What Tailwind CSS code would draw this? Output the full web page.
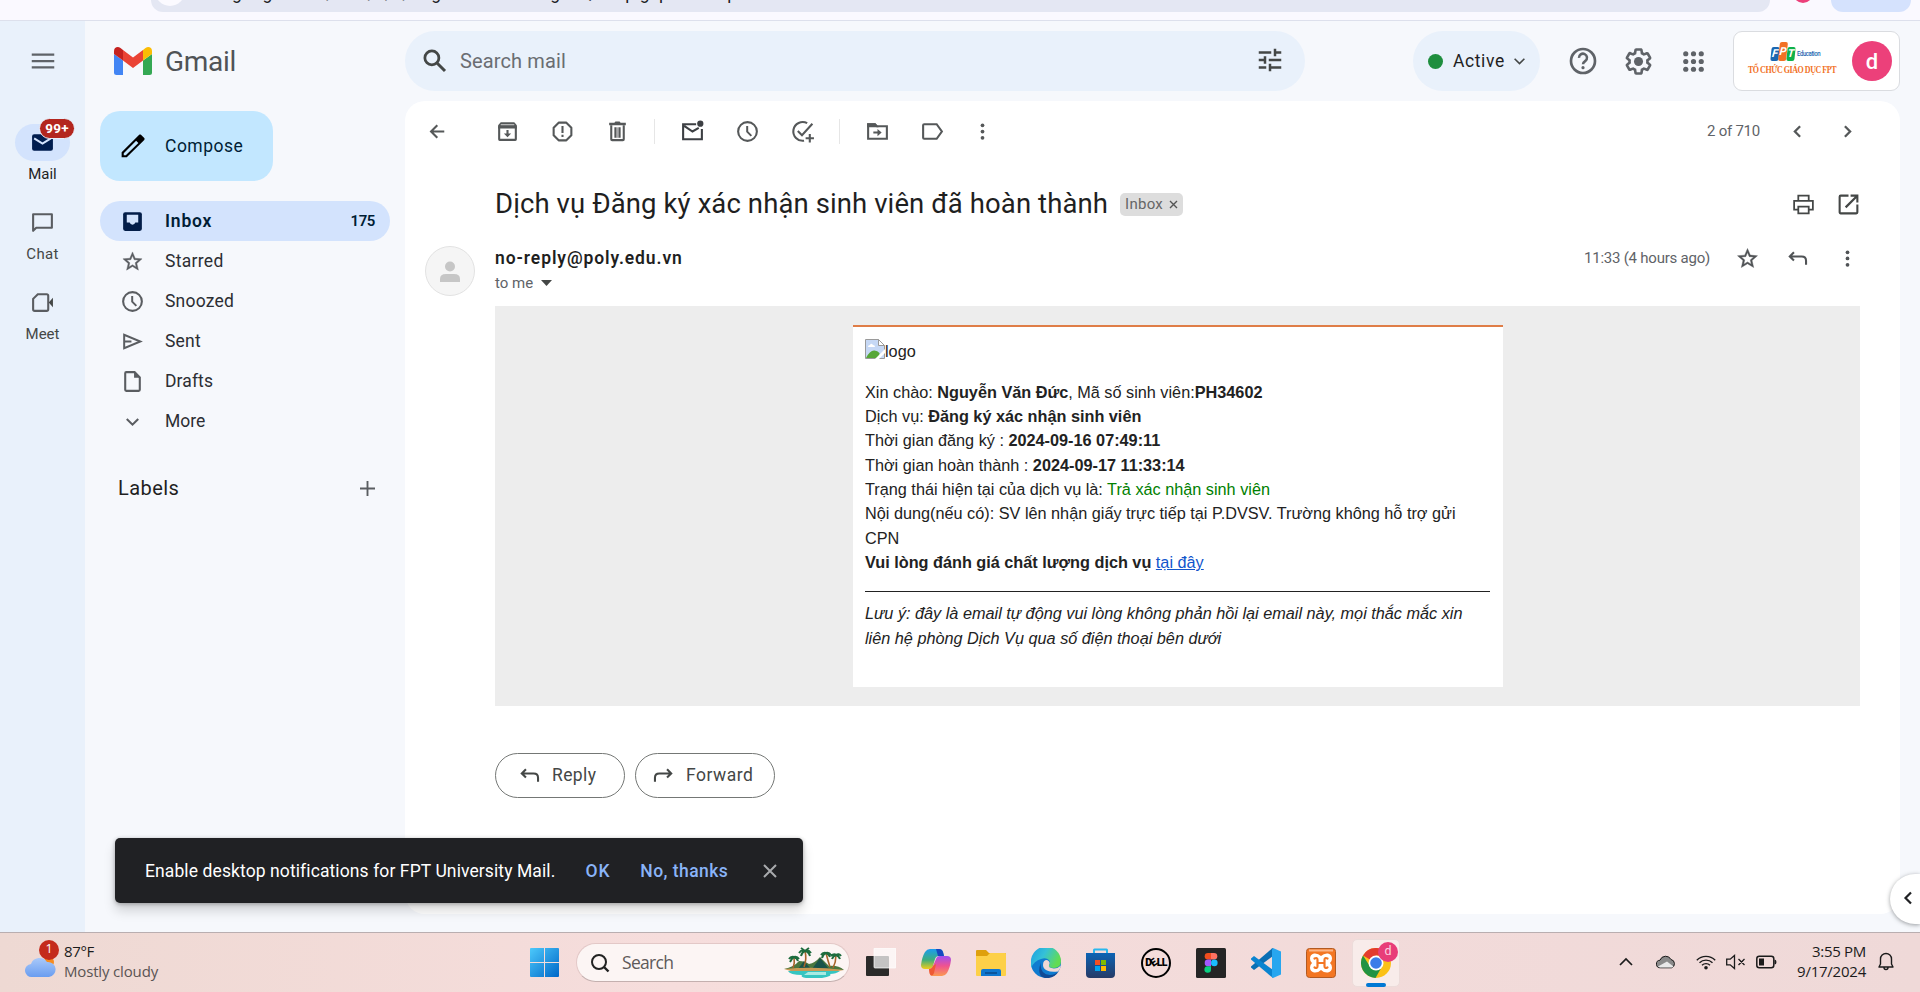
<!DOCTYPE html>
<html lang="vi">
<head>
<meta charset="utf-8">
<title>Gmail</title>
<script src="https://cdn.jsdelivr.net/npm/@tailwindcss/browser@4"></script>
</head>
<body class="flex h-[992px] w-[1920px] flex-col overflow-hidden bg-[#f6f8fc] font-['Roboto',sans-serif] text-[#1f1f1f]">

<!-- icon sprite -->
<svg class="hidden">
  <symbol id="clock" viewBox="0 0 24 24"><circle cx="12" cy="12" r="9" fill="none" stroke="currentColor" stroke-width="2"/><path d="M11.700 6.800v5.400l4 4" fill="none" stroke="currentColor" stroke-width="1.900"/></symbol>
  <symbol id="star" viewBox="0 0 24 24"><path fill="currentColor" stroke="currentColor" stroke-width=".4" d="M22 9.240l-7.190-.62L12 2 9.190 8.630 2 9.240l5.460 4.730L5.820 21 12 17.270 18.180 21l-1.630-7.030L22 9.240zM12 15.400l-3.760 2.270 1-4.280-3.320-2.880 4.380-.38L12 6.100l1.710 4.040 4.380.38-3.320 2.880 1 4.280L12 15.400z"/></symbol>
  <symbol id="more" viewBox="0 0 24 24"><g fill="currentColor"><circle cx="12" cy="6" r="1.800"/><circle cx="12" cy="12" r="1.800"/><circle cx="12" cy="18" r="1.800"/></g></symbol>
  <symbol id="reply" viewBox="0 0 24 24"><path d="M8.600 6 4.600 10l4 4M4.600 10H16q4.200 0 4.200 4.200V18" fill="none" stroke="currentColor" stroke-width="2"/></symbol>
  <symbol id="chev" viewBox="0 0 24 24"><path d="M14.500 7 9.500 12l5 5" fill="none" stroke="currentColor" stroke-width="2.200"/></symbol>
</svg>

<!-- browser toolbar edge -->
<div class="flex h-[21px] shrink-0 items-start border-b border-[#dde0ec] bg-[#faf9ff] pl-[151px]">
  <div class="flex h-3 w-[1619px] overflow-hidden rounded-b-[20px] bg-[#e4e7f3] text-[17.5px] leading-[20px] text-[#202124]">
    <div class="mt-[-24px] ml-1 size-[30px] shrink-0 rounded-full bg-[#fbfaff]"></div>
    <div class="mt-[-17px] ml-[8px] flex whitespace-nowrap tracking-[0.2px]">mail.google.com<span class="w-[110px] text-right">/mail/u/0/#og</span><span class="w-[124px] text-right">inboxFMfcg</span><span class="w-[75px] text-right">zQVzNp</span><span class="w-[14px] text-right">lg</span><span class="w-[18px] text-right">Lp</span><span class="w-[70px] text-right">xnLMRp</span></div>
  </div>
  <div class="mt-[-17px] ml-[23px] size-5 rounded-full bg-[#ec407a]"></div>
  <div class="ml-[18px] h-3 w-[80px] rounded-b-[18px] bg-[#d5e2fd]"></div>
</div>

<div class="flex h-[911px] shrink-0">
  <!-- app rail -->
  <nav class="flex w-[85px] shrink-0 flex-col items-center bg-[#e9f1fb] text-[15px] text-[#444746]">
    <svg class="mt-[25px] size-[30px]" viewBox="0 0 24 24" fill="#5f6368"><path d="M3 18h18v-1.800H3zM3 12.900h18v-1.800H3zM3 6v1.800h18V6z"/></svg>
    <div class="relative mt-12 flex h-[37px] w-[55px] items-center justify-center rounded-full bg-[#d3e3fd]">
      <svg class="size-[25px]" viewBox="0 0 24 24"><path fill="#001d4f" d="M4 4h16a2 2 0 0 1 2 2v12a2 2 0 0 1-2 2H4a2 2 0 0 1-2-2V6a2 2 0 0 1 2-2z"/><path d="M4 8l8 5 8-5" fill="none" stroke="#d3e3fd" stroke-width="2"/></svg>
      <span class="absolute -top-[6px] left-[24px] flex h-[21px] w-[36px] items-center justify-center rounded-full border border-[#e9f1fb] bg-[#b3261e] text-[13.5px] font-bold tracking-[.3px] text-white">99+</span>
    </div>
    <span class="mt-1 leading-[18px] font-[450] text-[#1f1f1f]">Mail</span>
    <svg class="mt-[27px] size-[25px]" viewBox="0 0 24 24"><path d="M3 20V4h18v13H6z" fill="none" stroke="#5a5d61" stroke-width="2" stroke-linejoin="round"/></svg>
    <span class="mt-[10px] leading-[18px] tracking-[.3px]">Chat</span>
    <svg class="mt-[27px] size-[25px]" viewBox="0 0 24 24"><path d="M7.500 4H16q1.500 0 1.500 1.500v13q0 1.500-1.500 1.500H4.500Q3 20 3 18.500V8.500z" fill="none" stroke="#5a5d61" stroke-width="2"/><path d="M18 12l4-4.500v9z" fill="#444746"/></svg>
    <span class="mt-[10px] leading-[18px]">Meet</span>
  </nav>

  <!-- sidebar -->
  <aside class="flex w-[320px] shrink-0 flex-col pl-[15px] text-[17.5px]">
    <div class="flex h-[80px] items-center pl-[14px]">
      <svg class="h-[28px] w-[38px]" viewBox="0 0 38 28"><path d="M0 7l9 6.500V28H2.500Q0 28 0 25.500z" fill="#4285f4"/><path d="M38 7l-9 6.500V28h6.500q2.500 0 2.500-2.500z" fill="#34a853"/><path d="M9 3l10 7.500L29 3v10.500L19 21 9 13.500z" fill="#ea4335"/><path d="M0 7V4C0 .5 3.600-1.200 6.500 1L9 3v10.500z" fill="#c5221f"/><path d="M38 7V4c0-3.500-3.600-5.200-6.500-3L29 3v10.500z" fill="#fbbc04"/></svg>
      <span class="mt-[2px] ml-[13px] text-[28px] tracking-[-0.3px] text-[#505356]">Gmail</span>
    </div>
    <button class="mt-[10px] flex h-[70px] w-[173px] items-center rounded-[20px] bg-[#c2e7ff] pl-[18px] font-[450] text-[#001d35]">
      <svg class="size-[30px]" viewBox="0 0 24 24"><path fill="#000" fill-rule="evenodd" d="M17.660 2.700c-.25 0-.51.100-.7.290L2.900 16.900V21h4.100L21 7.100c.39-.39.39-1.020 0-1.410l-2.640-2.700c-.2-.2-.45-.29-.7-.29zM14.500 7.800l1.800 1.800L6.200 19.400H4.600v-1.700z"/></svg>
      <span class="ml-[17px] tracking-[.5px]">Compose</span>
    </button>
    <div class="mt-5 flex h-10 w-[290px] items-center rounded-full bg-[#d3e3fd] pl-5 font-semibold text-[#001d35]">
      <svg class="size-[25px]" viewBox="0 0 24 24"><rect x="3" y="3" width="18" height="18" rx="2" fill="#041e49"/><path d="M6.500 5.500h11V13h-2.800a2.800 2.800 0 0 1-5.400 0H6.500z" fill="#d3e3fd"/></svg>
      <span class="ml-5 grow tracking-[.8px]">Inbox</span><span class="mr-[15px] text-[15px] tracking-[-.4px]">175</span>
    </div>
    <div class="flex h-10 items-center gap-5 pl-5 tracking-[.3px] text-[#2c2e33]"><svg class="size-[25px] p-[1px] text-[#5a5d61]"><use href="#star"/></svg>Starred</div>
    <div class="flex h-10 items-center gap-5 pl-5 tracking-[.2px] text-[#2c2e33]"><svg class="size-[25px] text-[#5a5d61]"><use href="#clock"/></svg>Snoozed</div>
    <div class="flex h-10 items-center gap-5 pl-5 tracking-[.2px] text-[#2c2e33]"><svg class="size-[25px]" viewBox="0 0 24 24"><path d="M4 5.500v13L19.500 12zM4 12h7" fill="none" stroke="#5a5d61" stroke-width="1.900"/></svg>Sent</div>
    <div class="flex h-10 items-center gap-5 pl-5 tracking-[.1px] text-[#2c2e33]"><svg class="size-[25px]" viewBox="0 0 24 24"><path d="M14 3H6q-1 0-1 1v16q0 1 1 1h12q1 0 1-1V8z" fill="none" stroke="#5a5d61" stroke-width="2"/><path d="M13.500 2.500V8.500h6z" fill="#5a5d61"/></svg>Drafts</div>
    <div class="flex h-10 items-center gap-5 pl-5 text-[#2c2e33]"><svg class="size-[25px]" viewBox="0 0 24 24"><path d="M6.500 9.500l5.500 5.500 5.500-5.500" fill="none" stroke="#5a5d61" stroke-width="2"/></svg>More</div>
    <div class="mt-[27px] flex h-10 items-center justify-between pr-[25px] pl-[18px]">
      <span class="text-[20px] font-[450] tracking-[.45px] text-[#1f1f1f]">Labels</span>
      <svg class="size-[25px]" viewBox="0 0 24 24"><path d="M12 4.800v14.400M4.800 12h14.400" stroke="#5a5d61" stroke-width="1.800"/></svg>
    </div>
  </aside>

  <main class="flex w-[1515px] flex-col">
    <!-- header -->
    <header class="flex h-[80px] w-full shrink-0 items-center">
      <div class="flex h-[60px] w-[900px] items-center rounded-full bg-[#e9f1fb] pr-5 pl-[15px]">
        <svg class="size-[30px]" viewBox="0 0 24 24"><circle cx="9.500" cy="9.500" r="5.600" fill="none" stroke="#444746" stroke-width="2.200"/><path d="M13.800 13.800l6.200 6.200" stroke="#444746" stroke-width="2.400"/></svg>
        <span class="ml-[10px] grow text-[20px] tracking-[.13px] text-[#6a6d72]">Search mail</span>
        <svg class="size-[30px] -translate-y-px" viewBox="0 0 24 24" fill="#444746"><path d="M3 17v2h6v-2H3zM3 5v2h10V5H3zm10 16v-2h8v-2h-8v-2h-2v6h2zM7 9v2H3v2h4v2h2V9H7zm14 4v-2H11v2h10zm-6-4h2V7h4V5h-4V3h-2v6z"/></svg>
      </div>
      <div class="ml-[108px] flex h-[60px] w-[127px] items-center rounded-full bg-[#e9f1fb] pl-[15px]">
        <span class="size-[15px] rounded-full bg-[#1e8e3e]"></span>
        <span class="mt-px ml-[10px] text-[17.5px] font-[450] tracking-[.6px]">Active</span>
        <svg class="ml-[8px] size-[13px]" viewBox="0 0 12 12"><path d="M1.500 3.500L6 8l4.500-4.500" fill="none" stroke="#444746" stroke-width="1.500"/></svg>
      </div>
      <svg class="ml-[27px] size-[32px]" viewBox="0 0 24 24"><circle cx="12" cy="12" r="9" fill="none" stroke="#5f6368" stroke-width="2"/><path d="M9 9.700a3 3 0 1 1 4.800 2.200c-1.100.8-1.800 1.400-1.800 2.600" fill="none" stroke="#5f6368" stroke-width="1.900"/><circle cx="12" cy="17" r="1.200" fill="#5f6368"/></svg>
      <svg class="ml-6 size-[31px]" viewBox="0 0 24 24" fill="#5f6368"><path d="M13.850 22.250h-3.700c-.74 0-1.360-.54-1.450-1.270l-.27-1.890c-.27-.14-.53-.29-.79-.46l-1.800.72c-.7.260-1.470-.03-1.810-.65L2.200 15.530c-.35-.66-.2-1.440.36-1.880l1.530-1.190c-.01-.15-.02-.3-.02-.46 0-.15.010-.31.020-.46l-1.520-1.190c-.59-.45-.74-1.260-.37-1.880l1.850-3.190c.34-.62 1.110-.9 1.790-.63l1.810.73c.26-.17.52-.32.78-.46l.27-1.910c.09-.7.710-1.250 1.440-1.250h3.700c.74 0 1.360.54 1.450 1.270l.27 1.890c.27.140.53.290.79.460l1.800-.72c.71-.26 1.480.030 1.820.65l1.840 3.180c.36.660.2 1.440-.36 1.880l-1.520 1.190c.01.150.02.300.02.460s-.01.310-.02.460l1.520 1.190c.56.450.72 1.230.37 1.860l-1.860 3.220c-.34.62-1.110.9-1.800.63l-1.800-.72c-.26.170-.52.320-.78.460l-.27 1.910c-.1.680-.72 1.220-1.460 1.220zm-3.230-2h2.760l.37-2.550.53-.22c.44-.18.880-.44 1.340-.78l.45-.34 2.380.96 1.380-2.400-2.030-1.580.07-.56c.03-.26.060-.51.060-.78s-.03-.53-.06-.78l-.07-.56 2.030-1.580-1.390-2.400-2.390.96-.45-.35c-.42-.32-.87-.58-1.330-.77l-.52-.22-.37-2.550h-2.760l-.37 2.550-.53.210c-.44.190-.88.440-1.340.79l-.45.330-2.380-.95-1.390 2.390 2.030 1.580-.07.560a7 7 0 0 0-.06.790c0 .26.020.53.060.78l.07.560-2.030 1.580 1.380 2.400 2.390-.96.450.35c.43.330.86.580 1.330.77l.53.220z"/><circle cx="12" cy="12" r="3.500"/></svg>
      <svg class="ml-6 size-[31px]" viewBox="0 0 24 24" fill="#5f6368"><circle cx="6" cy="6" r="2"/><circle cx="12" cy="6" r="2"/><circle cx="18" cy="6" r="2"/><circle cx="6" cy="12" r="2"/><circle cx="12" cy="12" r="2"/><circle cx="18" cy="12" r="2"/><circle cx="6" cy="18" r="2"/><circle cx="12" cy="18" r="2"/><circle cx="18" cy="18" r="2"/></svg>
      <div class="ml-6 flex h-[60px] w-[167px] items-center rounded-[9px] border border-[#dadce0] bg-white pl-[12px]">
        <div class="flex w-[92px] flex-col items-center">
          <div class="flex items-center pl-2 text-[11px] leading-[13px] font-bold text-white italic">
            <span class="mt-[1px] h-[14px] w-[8px] -skew-x-6 rounded-[2px] bg-[#1b66b1] text-center">F</span><span class="-mt-1 h-[19px] w-[8px] -skew-x-6 rounded-[2px] bg-[#f27125] pt-[3px] text-center">P</span><span class="mt-[1px] h-[14px] w-[8px] -skew-x-6 rounded-[2px] bg-[#0db14b] text-center">T</span>
            <span class="-mr-[5px] ml-[2px] origin-left scale-x-[.8] text-[7.5px] font-medium tracking-[-.5px] text-[#1b66b1] not-italic">Education</span>
          </div>
          <span class="mt-[3px] scale-x-[.76] font-['Liberation_Serif',serif] text-[10.5px] leading-[12px] font-bold tracking-[-.6px] whitespace-nowrap text-[#f27125]">TỔ CHỨC GIÁO DỤC FPT</span>
        </div>
        <div class="ml-[14px] flex size-10 items-center justify-center rounded-full bg-[#ec407a] text-[22px] font-medium text-white">d</div>
      </div>
    </header>

    <!-- message pane -->
    <section class="flex h-[813px] w-[1495px] flex-col rounded-[20px] bg-white">
      <div class="flex h-[61px] shrink-0 items-center pr-[40px] pl-5 text-[#555859]">
        <svg class="size-[25px]" viewBox="0 0 24 24"><path d="M11.800 6l-6 6 6 6M5.800 12H18.500" fill="none" stroke="currentColor" stroke-width="2"/></svg>
        <svg class="ml-[45px] size-[25px]" viewBox="0 0 24 24"><path d="M4 7v12.500q0 .5.500.5h15q.5 0 .5-.5V7" fill="none" stroke="currentColor" stroke-width="2"/><path d="M5.500 3h13L21 6v3H3V6z" fill="currentColor"/><path d="M5.500 5.500h13" stroke="#fff" stroke-width=".7"/><path d="M11 10.500h2V14h2.500L12 17.500 8.500 14H11z" fill="currentColor"/></svg>
        <svg class="ml-[30px] size-[25px]" viewBox="0 0 24 24"><path d="M8.300 3.500h7.400l4.800 4.800v7.400l-4.800 4.800H8.300l-4.800-4.800V8.300z" fill="none" stroke="currentColor" stroke-width="2" stroke-linejoin="round"/><path d="M11 6.800h2V13.500h-2zM11 15h2v2.200h-2z" fill="currentColor"/></svg>
        <svg class="ml-[30px] size-[25px]" viewBox="0 0 24 24"><path d="M4 3.500h5l1-1h4l1 1h5v2.500H4z" fill="currentColor"/><path d="M6 6v13.500q0 .8.800.8h10.400q.8 0 .8-.8V6M10 8v10M14 8v10" fill="none" stroke="currentColor" stroke-width="2"/><path d="M12 8v10" stroke="currentColor" stroke-opacity=".5" stroke-width="2"/></svg>
        <div class="ml-6 h-[25px] w-px bg-[#e6e6e6]"></div>
        <svg class="ml-[25px] size-[25px] text-[#3c3f43]" viewBox="0 0 24 24"><path d="M15.500 5H3v14.500h18V9.500M4 6.500l8 5.500 6-3.500" fill="none" stroke="currentColor" stroke-width="2"/><circle cx="19.500" cy="4.500" r="3" fill="currentColor"/></svg>
        <svg class="ml-[30px] size-[25px]"><use href="#clock"/></svg>
        <svg class="ml-[30px] size-[25px]" viewBox="0 0 24 24"><path d="M16.500 4A9 9 0 1 0 13.500 20.800M7.500 11.500l4 4L21.500 4.500M19 14.500v8M15 18.500h8" fill="none" stroke="currentColor" stroke-width="2"/></svg>
        <div class="ml-6 h-[25px] w-px bg-[#e6e6e6]"></div>
        <svg class="ml-[25px] size-[25px]" viewBox="0 0 24 24"><path d="M3 5h6.500l2 2H21v12H3z" fill="none" stroke="currentColor" stroke-width="2"/><path d="M2 4h8l3 4H2zM8 12h4V9.500l4 3.500-4 3.500V14H8z" fill="currentColor"/></svg>
        <svg class="ml-[30px] size-[25px]" viewBox="0 0 24 24"><path d="M4 5h12l5 7-5 7H4q-1 0-1-1V6q0-1 1-1z" fill="none" stroke="currentColor" stroke-width="2"/></svg>
        <svg class="ml-[25px] size-[25px]"><use href="#more"/></svg>
        <span class="ml-auto text-[15px] tracking-[-.24px] text-[#5f6368]">2 of 710</span>
        <svg class="ml-[25px] size-[25px]"><use href="#chev"/></svg>
        <svg class="ml-[25px] size-[25px] rotate-180"><use href="#chev"/></svg>
      </div>

      <div class="flex h-[84px] shrink-0 items-center pr-[39px] pl-[90px]">
        <h1 class="text-[27.5px] leading-[40px] tracking-[.1px] whitespace-nowrap">Dịch vụ Đăng ký xác nhận sinh viên đã hoàn thành</h1>
        <span class="ml-[12px] flex h-[23px] w-[63px] items-center rounded-[5px] bg-[#dddddd] pl-[5px] text-[15px] tracking-[.27px] text-[#666]">Inbox<svg class="ml-[6px] size-[9px]" viewBox="0 0 9 9"><path d="M1 1l7 7M8 1L1 8" stroke="#555" stroke-width="1.400"/></svg></span>
        <svg class="ml-auto size-[25px]" viewBox="0 0 24 24"><path d="M7 8V3.500h10V8M7 17H3V8.500h18V17h-4M7 14h10v6.500H7z" fill="none" stroke="#444746" stroke-width="1.700"/></svg>
        <svg class="ml-5 size-[25px]" viewBox="0 0 24 24" fill="#444746"><path d="M19.500 19.500H4.500V4.500H12v-2H4.500a2 2 0 0 0-2 2v15c0 1.100.9 2 2 2H19.500a2 2 0 0 0 2-2V12h-2v7.500zM14 2.500v2h4L8.500 14l1.500 1.500L19.500 6v4h2V2.500H14z"/></svg>
      </div>

      <div class="flex h-[60px] shrink-0 items-start pr-[40px] pl-5">
        <svg class="size-[50px]" viewBox="0 0 50 50"><circle cx="25" cy="25" r="24.500" fill="#f5f5f5" stroke="#e2e2e2"/><circle cx="25" cy="20.500" r="5" fill="#c6c6c6"/><path d="M15 36v-3q0-5 6-5h8q6 0 6 5v3z" fill="#c6c6c6"/></svg>
        <div class="ml-5 flex flex-col">
          <span class="text-[17.5px] leading-[24px] font-semibold tracking-[.9px]">no-reply@poly.edu.vn</span>
          <span class="mt-px flex items-center text-[15px] leading-[24px] text-[#5f6368]">to me<svg class="ml-[8px] h-[6px] w-[11px]" viewBox="0 0 11 6"><path d="M0 0h11L5.500 6z" fill="#444746"/></svg></span>
        </div>
        <div class="ml-auto flex h-[25px] items-center text-[#505356]">
          <span class="text-[15px] tracking-[-.23px] text-[#5f6368]">11:33 (4 hours ago)</span>
          <svg class="ml-[25px] size-[25px] p-[.5px]"><use href="#star"/></svg>
          <svg class="ml-[25px] size-[25px]"><use href="#reply"/></svg>
          <svg class="ml-[25px] size-[25px]"><use href="#more"/></svg>
        </div>
      </div>

      <div class="ml-[90px] flex h-[400px] w-[1365px] shrink-0 justify-center bg-[#ededed] pt-[19px] font-['Liberation_Sans',Arial,sans-serif] text-[16.25px] leading-[24.375px] text-[#222]">
        <div class="h-[362px] w-[650px] border-t-2 border-[#df7d47] bg-white px-[12.5px]">
          <div class="mt-[12px] flex h-[20px] items-end">
            <svg class="size-5" viewBox="0 0 20 20"><path d="M.5.500h13l6 6v13H.5z" fill="#c6d8f5" stroke="#9a9a9a"/><path d="M13.500.500v6h6z" fill="#fff" stroke="#9a9a9a"/><path d="M3 8q0-2 2-2 1-2.500 3 0 2 0 2 2z" fill="#fff"/><path d="M1 19q4-8 8.500-7.500 3 0 5 2.500v5z" fill="#57a639"/><path d="M10 20l10-10v4l-6 6z" fill="#fff"/></svg>
            <span class="-mb-[4px]">logo</span>
          </div>
          <div class="mt-[20.600px]">Xin chào: <b>Nguyễn Văn Đức</b>, Mã số sinh viên:<b>PH34602</b></div>
          <div>Dịch vụ: <b>Đăng ký xác nhận sinh viên</b></div>
          <div>Thời gian đăng ký : <b>2024-09-16 07:49:11</b></div>
          <div>Thời gian hoàn thành : <b>2024-09-17 11:33:14</b></div>
          <div>Trạng thái hiện tại của dịch vụ là: <span class="text-[#008000]">Trả xác nhận sinh viên</span></div>
          <div>Nội dung(nếu có): SV lên nhận giấy trực tiếp tại P.DVSV. Trường không hỗ trợ gửi<br>CPN</div>
          <div><b>Vui lòng đánh giá chất lượng dịch vụ</b> <a class="text-[#1155cc] underline">tại đây</a></div>
          <div class="mt-[16.400px] border-t border-[#222] pt-[9.400px] italic">Lưu ý: đây là email tự động vui lòng không phản hồi lại email này, mọi thắc mắc xin<br>liên hệ phòng Dịch Vụ qua số điện thoại bên dưới</div>
        </div>
      </div>

      <div class="mt-[47px] ml-[90px] flex gap-[10px] text-[17.5px] font-[450] text-[#444746]">
        <div class="flex h-[45px] w-[130px] items-center rounded-full border border-[#747775] pl-[21px]"><svg class="size-[25px]"><use href="#reply"/></svg><span class="ml-[10px] tracking-[.4px]">Reply</span></div>
        <div class="flex h-[45px] w-[140px] items-center rounded-full border border-[#747775] pl-[15px]"><svg class="size-[25px] -scale-x-100"><use href="#reply"/></svg><span class="ml-[10px] tracking-[.5px]">Forward</span></div>
      </div>
    </section>
  </main>
</div>

<!-- notification toast -->
<div class="absolute top-[838px] left-[115px] flex h-[65px] w-[688px] items-center rounded-[5px] bg-[#202124] pt-px pl-[30px] text-[17.5px] text-white shadow-[0_8px_12px_rgba(0,0,0,.15),0_1px_4px_rgba(0,0,0,.3)]">
  <span class="tracking-[.1px] whitespace-nowrap">Enable desktop notifications for FPT University Mail.</span>
  <span class="ml-[30px] font-medium tracking-[.9px] text-[#8ab4f8]">OK</span>
  <span class="ml-[30px] font-medium tracking-[.45px] text-[#8ab4f8]">No, thanks</span>
  <svg class="ml-[35px] size-[14px]" viewBox="0 0 14 14"><path d="M1 1l12 12M13 1L1 13" stroke="#a8aaad" stroke-width="2"/></svg>
</div>

<!-- side panel toggle -->
<div class="absolute top-[874px] left-[1890px] flex h-[50px] w-[30px] items-center rounded-l-full bg-white pl-[11px] shadow-[0_1px_4px_rgba(60,64,67,.5)]"><svg class="size-[14px] -translate-y-px" viewBox="0 0 14 14"><path d="M10 1.500L4.500 7l5.500 5.500" fill="none" stroke="#202124" stroke-width="2.200"/></svg></div>

<!-- taskbar -->
<footer class="flex h-[60px] w-full shrink-0 items-center border-t border-[#b9aeb0] bg-linear-to-r from-[#eed9d3] via-[#f6dddc] via-35% to-[#efd9d8] font-['Open_Sans','Noto_Sans',sans-serif] text-[#1b1b1b]">
  <div class="relative ml-[25px] h-[40px] w-[39px]">
    <svg class="absolute top-[13px] left-0 h-[22px] w-[31px]" viewBox="0 0 31 22"><defs><linearGradient id="cl" x1="0" y1="0" x2="0" y2="1"><stop offset="0" stop-color="#a9c9fa"/><stop offset="1" stop-color="#6a9df0"/></linearGradient></defs><circle cx="24" cy="6" r="5" fill="#f78b1f"/><path d="M7 21a6.500 6.500 0 0 1-1-13A9 9 0 0 1 22 6a7.500 7.500 0 0 1 2 15z" fill="url(#cl)"/></svg>
    <span class="absolute -top-[3px] left-[14px] flex size-5 items-center justify-center rounded-full bg-[#c42b1c] text-[12.5px] text-white">1</span>
  </div>
  <div class="-mt-1 flex w-[466px] flex-col text-[15px] leading-[20px]"><span class="tracking-[-.33px]">87°F</span><span class="tracking-[-.16px] text-[#5a5453]">Mostly cloudy</span></div>
  <svg class="size-[29px]" viewBox="0 0 29 29"><defs><linearGradient id="wn" x1="0" y1="0" x2="1" y2="1"><stop offset="0" stop-color="#4cc9fb"/><stop offset="1" stop-color="#0067c8"/></linearGradient></defs><path d="M1 0h13v14H0V1q0-1 1-1zM15 0h13q1 0 1 1v13H15zM0 15h14v14H1q-1 0-1-1zM15 15h14v13q0 1-1 1H15z" fill="url(#wn)"/></svg>
  <div class="ml-[17px] flex h-[39px] w-[274px] items-center rounded-full border border-[#e3c8c7] border-b-[#c4b0af] bg-[#fcf5f4] pl-[13px]">
    <svg class="size-5" viewBox="0 0 20 20"><circle cx="9" cy="9" r="7" fill="none" stroke="#222" stroke-width="2"/><path d="M14 14l4.500 4.500" stroke="#222" stroke-width="2.400"/></svg>
    <span class="ml-[12px] w-[162px] text-[17.5px] tracking-[-.7px] text-[#5e5a5a]">Search</span>
    <svg class="h-[32px] w-[60px]" viewBox="0 0 60 32"><path d="M0 22q10-2 15-8 6 0 10 3 6-1 11-7l9 9q9-1 15 4z" fill="#49773f"/><path d="M14 22l6-8 7 8zM28 22l8-11 9 11z" fill="#19534a"/><path d="M0 22q30-3 60 1l-12 2H10z" fill="#c99a55"/><path d="M4 24h52q-4 3-10 3 3 2-8 4H22q-6-1-4-3-12 0-14-4z" fill="#37c5c1"/><path d="M24 25h18v3H20z" fill="#a8ebe3"/><path d="M21 4q2 8-1 16M10 10q1 6-1 11M42 6q2 8 4 14M52 8q0 7-3 13" fill="none" stroke="#a8642a" stroke-width="1.600"/><g fill="none" stroke="#1d6b3d" stroke-width="2"><path d="M15 6q3-4 6-2 3-2 6 2M17 9q1-4 4-5 4 1 5 5M21 4l-4-3M21 4l4-3M5 12q2-3 5-2 3-1 5 2M6 15q2-4 4-5 3 1 4 4M37 8q2-3 5-2 3-1 5 2M38 11q1-4 4-5 3 1 4 4M47 9q3-3 5-1 3-2 5 1M48 12q1-3 4-4 3 1 4 4"/></g></svg>
  </div>
  <!-- task view -->
  <svg class="ml-[16px] size-[30px]" viewBox="0 0 30 30"><rect y="8" width="23" height="20" rx="1" fill="#2b2a29"/><rect x="8" y="0" width="22" height="20" rx="1" fill="#fff" opacity=".72"/><rect x="8" y="0" width="22" height="20" rx="1" fill="none" stroke="#fff" stroke-opacity=".7"/></svg>
  <!-- Copilot -->
  <svg class="ml-[25px] size-[30px]" viewBox="0 0 30 30"><defs><linearGradient id="c1" x1="0" y1="0" x2="0" y2="1"><stop offset="0" stop-color="#1a9cf0"/><stop offset=".55" stop-color="#3fae7c"/><stop offset="1" stop-color="#f2cd19"/></linearGradient><linearGradient id="c2" x1="0" y1="0" x2="0" y2="1"><stop offset="0" stop-color="#a04ef2"/><stop offset=".5" stop-color="#f0538f"/><stop offset="1" stop-color="#fb9a50"/></linearGradient></defs><path d="M9 1h9q3 0 4 3l1 4h-5q-3 0-4 3l-2 7q-1 3-4 3H4q-4 0-4-4 1-8 4-13 2-3 5-3z" fill="url(#c1)"/><path d="M15 1h3q3 0 4 3l1 4h-6z" fill="#1648c0"/><path d="M21 28h-9q-3 0-3.500-3l-.5-4q3 0 4-3l3-7q1-3 4-3h7q4 0 4 4-1 8-4 13-2 3-5 3z" fill="url(#c2)"/><path d="M8 21q3 0 4-3l3-2-2 9q-1 3-3 2.500-1.500-1-2-6.500z" fill="#ee5a34"/></svg>
  <!-- File explorer -->
  <svg class="ml-[25px] size-[30px]" viewBox="0 0 30 30"><path d="M0 3q0-1 1-1h9l3 3h16q1 0 1 1v9H0z" fill="#dfa00c"/><path d="M0 8h11l3-3h15q1 0 1 1v21q0 1-1 1H1q-1 0-1-1z" fill="#fdd048"/><path d="M5 28v-5q0-2 2-2h16q2 0 2 2v5z" fill="#1077cf"/><path d="M9 25h12" stroke="#0a4a8c" stroke-width="1.500"/></svg>
  <!-- Edge -->
  <svg class="ml-[25px] size-[30px]" viewBox="0 0 30 30"><defs><linearGradient id="e1" x1="0" y1="0" x2="1" y2=".4"><stop offset="0" stop-color="#1b9de2"/><stop offset=".5" stop-color="#35c1d8"/><stop offset="1" stop-color="#62dc53"/></linearGradient></defs><circle cx="15" cy="15" r="15" fill="#0f7bd0"/><path d="M0 14A15 15 0 0 1 30 13q0 7-7 7-6 0-5-3 2-2 0-5-3-3-8-1-7 2-10 9z" fill="url(#e1)"/><path d="M10 14q-2 12 9 13 5 0 9-4-5 8-14 7Q5 28 10 14z" fill="#114a95"/><path d="M12 17q0-5 4-5 4 2 2 5-1 3 5 3.500 4 0 7-3-1 4-3 6-7 1-11-1-4-2-4-5.500z" fill="#efd9d5"/></svg>
  <!-- Store -->
  <svg class="ml-[25px] size-[30px]" viewBox="0 0 30 30"><defs><linearGradient id="st" x1="0" y1="0" x2="0" y2="1"><stop offset="0" stop-color="#0c63b4"/><stop offset="1" stop-color="#263a66"/></linearGradient></defs><path d="M8 6V2q0-.5.5-.5h12q.5 0 .5.500V6" fill="none" stroke="#29b8ee" stroke-width="2"/><path d="M0 5h29v21q0 4-4 4H4q-4 0-4-4z" fill="url(#st)"/><path d="M9 12h5v5H9z" fill="#f25022"/><path d="M15 12h5v5h-5z" fill="#7fba00"/><path d="M9 18h5v5H9z" fill="#00a4ef"/><path d="M15 18h5v5h-5z" fill="#ffb900"/></svg>
  <!-- Dell -->
  <div class="ml-[25px] flex size-[30px] items-center justify-center rounded-full border-2 border-black font-['Roboto',sans-serif] text-[10.5px] font-black tracking-[-.6px] text-black"><span>D</span><span class="-rotate-35">E</span><span>LL</span></div>
  <!-- Figma -->
  <svg class="ml-[25px] size-[30px]" viewBox="0 0 30 30"><rect width="30" height="30" rx="1.500" fill="#252525"/><path d="M15 5h-3a3.300 3.300 0 0 0 0 6.600h3z" fill="#f24e1e"/><path d="M15 5h3a3.300 3.300 0 0 1 0 6.600h-3z" fill="#ff7262"/><path d="M15 11.600h-3a3.300 3.300 0 0 0 0 6.600h3z" fill="#a259ff"/><circle cx="18.300" cy="14.900" r="3.300" fill="#1abcfe"/><path d="M15 18.200h-3a3.300 3.300 0 1 0 3 3.300z" fill="#0acf83"/></svg>
  <!-- VS Code -->
  <svg class="ml-[25px] size-[30px]" viewBox="0 0 30 30"><path d="M22 0v8L3 22 0 19.500v-1L21 .5z" fill="#0a6fb4"/><path d="M0 10.500L3 8l19 14v8L0 11.500z" fill="#0a84d0"/><path d="M22 0l8 3.500v23L22 30q-1 0-1-2V2z" fill="#27a6ef"/></svg>
  <!-- XAMPP -->
  <svg class="ml-[25px] size-[30px]" viewBox="0 0 30 30"><rect x=".5" y=".5" width="29" height="29" rx="3" fill="#f37623" stroke="#b25a22"/><path d="M3 2.500h24" stroke="#fbb487" stroke-width="2"/><path d="M15 8q3-3 7-2.500 4 1 4 5 0 3-2 4.500 2 1.500 2 4.500 0 4-4 5-4 .5-7-2.500-3 3-7 2.500-4-1-4-5 0-3 2-4.500-2-1.500-2-4.500 0-4 4-5 4-.5 7 2.500z" fill="#fff"/><path d="M8.500 10.500q3-1.500 3 1.500v6q0 3-3 1.500M21.500 10.500q-3-1.500-3 1.500v6q0 3 3 1.500M11.500 15h7" fill="none" stroke="#f37623" stroke-width="2.200" stroke-linecap="round"/></svg>
  <!-- Chrome -->
  <div class="relative ml-[16px] flex h-[48px] w-[48px] items-center justify-center rounded-[5px] border border-[#ecdcda] bg-[#f8ecea]">
    <svg class="size-[30px]" viewBox="0 0 30 30"><circle cx="15" cy="15" r="15" fill="#fbc116"/><path d="M15 15L2 7.500A15 15 0 0 1 28 7.500H15z" fill="#e33b2e"/><path d="M2 7.500A15 15 0 0 0 14.500 30L21 18.500 15 15 9 18.500z" fill="#229342"/><circle cx="15" cy="15" r="7.500" fill="#fff"/><circle cx="15" cy="15" r="5.800" fill="#3a7de9"/></svg>
    <span class="absolute top-[2px] left-[25px] flex size-5 items-center justify-center rounded-full bg-[#e83e79] pb-px font-['Roboto',sans-serif] text-[12.5px] text-[#fbd5e2]">d</span>
    <span class="absolute -bottom-px left-[13px] h-1 w-5 rounded-full bg-[#0078d4]"></span>
  </div>
  <!-- tray -->
  <svg class="ml-[219px] h-[9px] w-[14px] -translate-y-px" viewBox="0 0 14 9"><path d="M1 8l6-6 6 6" fill="none" stroke="#1b1b1b" stroke-width="1.700"/></svg>
  <svg class="ml-[23px] h-[15px] w-[20px] -translate-y-px" viewBox="0 0 20 15"><path d="M4.500 13.800a3.800 3.800 0 0 1-.5-7.600 6 6 0 0 1 11-.7 4.300 4.300 0 0 1 .5 8.300z" fill="#8a8a8a" stroke="#1b1b1b"/><path d="M2 12.500l9-5 6.500 5q-1 1-2 1h-11q-1.500 0-2.500-1z" fill="#e9e9e9"/></svg>
  <svg class="ml-5 h-[16px] w-[20px] -translate-y-px" viewBox="0 0 20 16"><g fill="none" stroke="#1b1b1b" stroke-width="1.400"><path d="M.8 6.200a13 13 0 0 1 18.400 0M3.500 8.800a9.200 9.200 0 0 1 13 0M6 11.200a5.800 5.800 0 0 1 8 0"/></g><circle cx="10" cy="13.800" r="1.800" fill="#1b1b1b"/></svg>
  <svg class="ml-[10px] h-[16px] w-[20px] -translate-y-px" viewBox="0 0 20 16"><path d="M.7 5.200h3.500L8.500 1.500v13L4.200 10.800H.7zM12.500 5l6 6M18.500 5l-6 6" fill="none" stroke="#1b1b1b" stroke-width="1.300"/></svg>
  <svg class="ml-[10px] h-[14px] w-[21px] -translate-y-px" viewBox="0 0 21 14"><rect x=".8" y="1.200" width="17" height="11.500" rx="2.500" fill="none" stroke="#1b1b1b" stroke-width="1.500"/><rect x="3" y="3.500" width="5" height="7" fill="#1b1b1b"/><path d="M18.500 4.500q2 0 2 2.500t-2 2.500z" fill="#1b1b1b"/></svg>
  <div class="-mt-1 ml-[17px] flex w-[72px] flex-col items-end text-[15px] leading-[20px]"><span class="tracking-[-.3px]">3:55 PM</span><span class="tracking-[-.23px]">9/17/2024</span></div>
  <svg class="ml-[12px] h-[19px] w-[16px] -translate-y-px" viewBox="0 0 16 19"><path d="M1 15h14l-1.500-3V7a5.500 5.500 0 0 0-11 0v5zM6 15.500a2 2 0 0 0 4 0" fill="none" stroke="#1b1b1b" stroke-width="1.400" stroke-linejoin="round"/></svg>
</footer>
</body>
</html>
